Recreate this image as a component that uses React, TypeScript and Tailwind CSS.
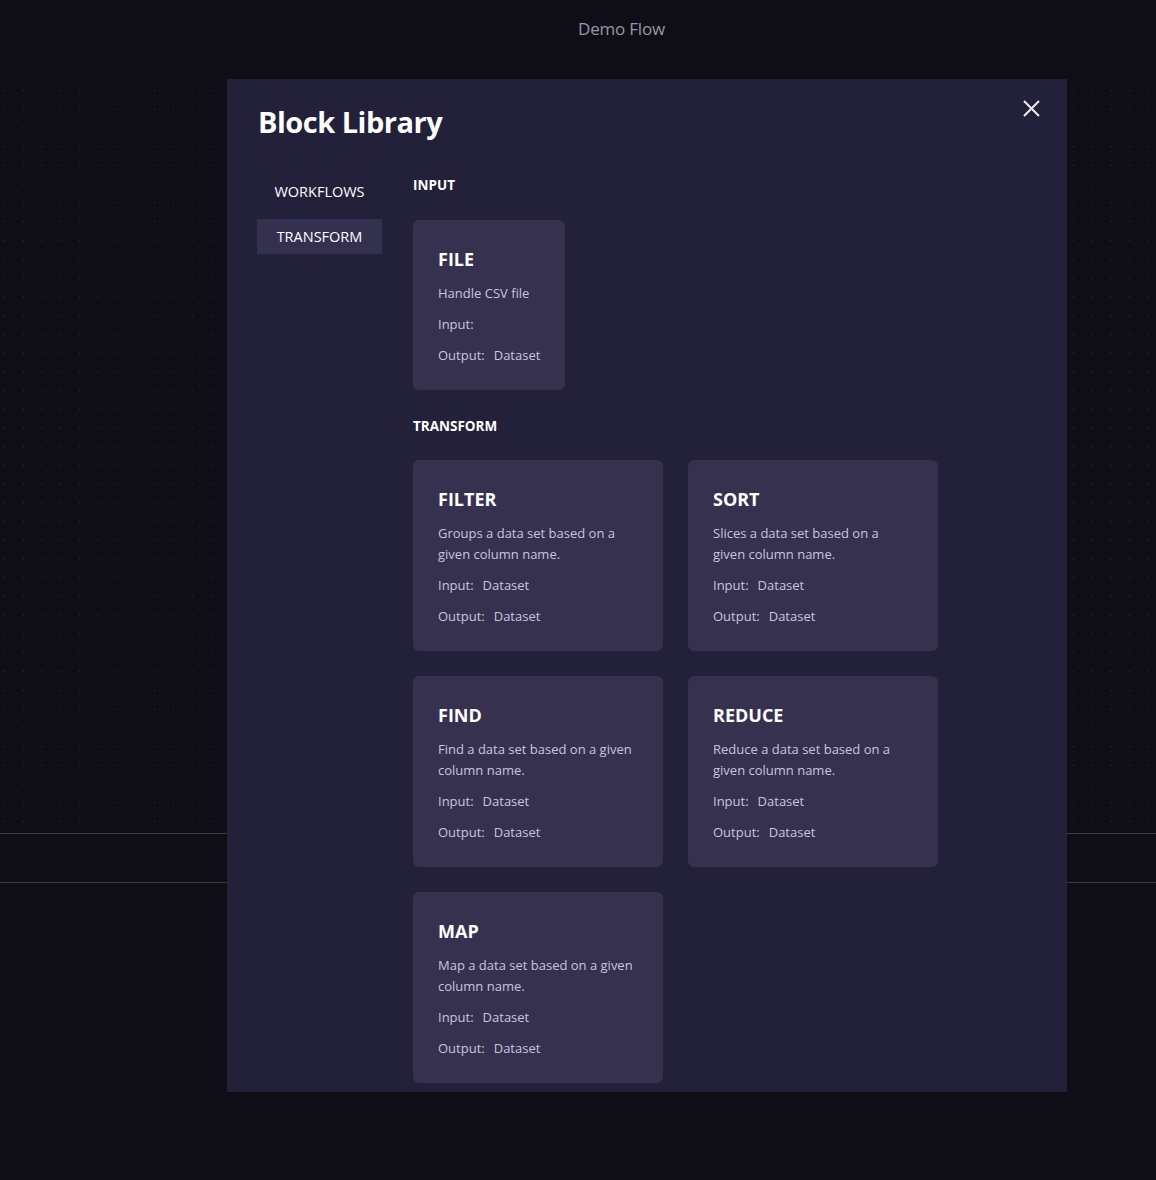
import React from "react";

interface Block {
  name: string;
  description: string;
  input?: string;
  output?: string;
}

const inputBlocks: Block[] = [
  { name: "FILE", description: "Handle CSV file", output: "Dataset" },
];

const transformBlocks: Block[] = [
  {
    name: "FILTER",
    description: "Groups a data set based on a given column name.",
    input: "Dataset",
    output: "Dataset",
  },
  {
    name: "SORT",
    description: "Slices a data set based on a given column name.",
    input: "Dataset",
    output: "Dataset",
  },
  {
    name: "FIND",
    description: "Find a data set based on a given column name.",
    input: "Dataset",
    output: "Dataset",
  },
  {
    name: "REDUCE",
    description: "Reduce a data set based on a given column name.",
    input: "Dataset",
    output: "Dataset",
  },
  {
    name: "MAP",
    description: "Map a data set based on a given column name.",
    input: "Dataset",
    output: "Dataset",
  },
];

const BlockCard = ({ block, fit }: { block: Block; fit?: boolean }) => (
  <div
    className={`${
      fit ? "w-fit" : "w-[250px]"
    } rounded-md bg-[#35314f] px-[25px] pt-[25px] pb-[24px] text-[13px] leading-[21px] text-[#c8c6de]`}
  >
    <h3 className="text-[18px] leading-[28px] font-bold text-white">
      {block.name}
    </h3>
    <p className="mt-[10px]">{block.description}</p>
    <p className="mt-[10px]">
      Input:<span className="ml-[9px]">{block.input}</span>
    </p>
    <p className="mt-[10px]">
      Output:<span className="ml-[9px]">{block.output}</span>
    </p>
  </div>
);

export default function App() {
  return (
    <div className="relative min-h-[1180px] bg-[#0f0e17] font-['Open_Sans',sans-serif] overflow-hidden">
      {/* top bar */}
      <div className="grid grid-cols-2 h-[81px]">
        <div />
        <div className="pt-[16px] text-[17px] text-[#9896a8] tracking-[-0.2px]">
          Demo Flow
        </div>
      </div>

      {/* canvas */}
      <div className="h-[752px] bg-[radial-gradient(circle,#2c2b38_0.9px,transparent_1px)] bg-[size:18.75px_18.75px] bg-[position:-4.7px_0px]" />
      <div className="h-[50px] border-y border-[#3b3558]" />

      {/* modal */}
      <div className="absolute left-[227px] top-[79px] w-[840px] h-[1013px] bg-[#23203a] px-[31px] pt-[20px] overflow-hidden">
        <button className="absolute right-[26px] top-[20px] text-[#eeeeee]">
          <svg width="19" height="19" viewBox="0 0 19 19" fill="none">
            <path
              d="M2 2L17 17M17 2L2 17"
              stroke="currentColor"
              strokeWidth="2"
            />
          </svg>
        </button>
        <h1 className="text-[29px] leading-[46px] font-bold text-white tracking-[-0.5px]">
          Block Library
        </h1>
        <div className="flex gap-[31px] mt-[29px]">
          <div className="w-[125px] shrink-0 -ml-px flex flex-col gap-[10px] text-[14.5px] text-white">
            <div className="h-[35px] flex items-center justify-center">
              WORKFLOWS
            </div>
            <div className="h-[35px] flex items-center justify-center bg-[#34304f]">
              TRANSFORM
            </div>
          </div>
          <div className="pt-[2px]">
            <h2 className="text-[13.5px] font-bold text-white leading-[20px] -mt-[1px]">
              INPUT
            </h2>
            <div className="mt-[25px] flex gap-[25px]">
              {inputBlocks.map((b) => (
                <BlockCard key={b.name} block={b} fit />
              ))}
            </div>
            <h2 className="mt-[26px] text-[13.5px] font-bold text-white leading-[20px]">
              TRANSFORM
            </h2>
            <div className="mt-[24px] grid grid-cols-[250px_250px] gap-[25px]">
              {transformBlocks.map((b) => (
                <BlockCard key={b.name} block={b} />
              ))}
            </div>
          </div>
        </div>
      </div>
    </div>
  );
}
